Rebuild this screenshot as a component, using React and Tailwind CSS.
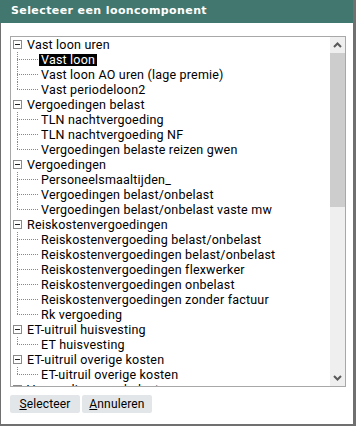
import React from "react";

const groups = [
  { label: "Vast loon uren", children: ["Vast loon", "Vast loon AO uren (lage premie)", "Vast periodeloon2"] },
  { label: "Vergoedingen belast", children: ["TLN nachtvergoeding", "TLN nachtvergoeding NF", "Vergoedingen belaste reizen gwen"] },
  { label: "Vergoedingen", children: ["Personeelsmaaltijden_", "Vergoedingen belast/onbelast", "Vergoedingen belast/onbelast vaste mw"] },
  {
    label: "Reiskostenvergoedingen",
    children: [
      "Reiskostenvergoeding belast/onbelast",
      "Reiskostenvergoedingen belast/onbelast",
      "Reiskostenvergoedingen flexwerker",
      "Reiskostenvergoedingen onbelast",
      "Reiskostenvergoedingen zonder factuur",
      "Rk vergoeding",
    ],
  },
  { label: "ET-uitruil huisvesting", children: ["ET huisvesting"] },
  { label: "ET-uitruil overige kosten", children: ["ET-uitruil overige kosten"] },
  { label: "Vergoedingen onbelast", children: ["Overige vergoedingen"] },
];

function MinusBox() {
  return (
    <div className="w-[9px] h-[9px] border border-[#8a8a8a] bg-white flex items-center justify-center shrink-0">
      <div className="w-[5px] h-px bg-[#222]" />
    </div>
  );
}

function ChildRow({ text, last, selected }) {
  return (
    <div className="h-[15px] flex items-stretch">
      <div className="w-[6px] shrink-0" />
      <div className="w-[22px] shrink-0 flex flex-col">
        <div className="h-[7px] border-l border-dotted border-[#888]" />
        <div className="h-px border-t border-dotted border-[#888] w-[21px]" />
        <div className={"flex-1 " + (last ? "" : "border-l border-dotted border-[#888]")} />
      </div>
      <div className="flex items-center">
        {selected ? (
          <span className="bg-black text-white px-[2px] h-[12px] leading-[12px] whitespace-nowrap">{text}</span>
        ) : (
          <span className="px-[2px] whitespace-nowrap leading-[12px]">{text}</span>
        )}
      </div>
    </div>
  );
}

function Chevron({ down }) {
  return (
    <svg width="9" height="6" viewBox="0 0 9 6" className="block">
      {down ? (
        <path d="M1 1 L4.5 4.5 L8 1" fill="none" stroke="#5a5a5a" strokeWidth="2" />
      ) : (
        <path d="M1 5 L4.5 1.5 L8 5" fill="none" stroke="#5a5a5a" strokeWidth="2" />
      )}
    </svg>
  );
}

export default function App() {
  return (
    <div
      className="w-[356px] h-[426px] flex flex-col bg-white border-r-[3px] border-[#707070] overflow-hidden text-black"
      style={{ fontFamily: "Roboto, 'Noto Sans', sans-serif" }}
    >
      <div className="h-[23px] bg-[#41776f] flex items-center pl-[11px] shrink-0">
        <span
          className="text-white font-bold text-[11px] tracking-[0.4px]"
          style={{ fontFamily: "'DejaVu Sans', Verdana, sans-serif" }}
        >
          Selecteer een looncomponent
        </span>
      </div>
      <div className="flex-1 flex flex-col border-l border-b-2 border-[#707070] pl-[9px] pt-[13px]">
        <div className="w-[336px] h-[351px] border border-[#a8a8a8] flex overflow-hidden">
          <div className="flex-1 overflow-hidden text-[12.5px] tracking-[0.2px]">
            {groups.map((g, gi) => (
              <div key={gi}>
                <div className="h-[15px] flex items-center">
                  <div className="w-[2px] shrink-0" />
                  <MinusBox />
                  <div className="w-[5px] shrink-0" />
                  <span className="whitespace-nowrap leading-[12px]">{g.label}</span>
                </div>
                {g.children.map((c, ci) => (
                  <ChildRow
                    key={ci}
                    text={c}
                    last={ci === g.children.length - 1}
                    selected={gi === 0 && ci === 0}
                  />
                ))}
              </div>
            ))}
          </div>
          <div className="w-[15px] bg-[#efefef] flex flex-col shrink-0">
            <div className="h-[16px] flex items-center justify-center">
              <Chevron />
            </div>
            <div className="h-[154px] bg-[#cdcdcd]" />
            <div className="flex-1" />
            <div className="h-[16px] flex items-center justify-center">
              <Chevron down />
            </div>
          </div>
        </div>
        <div className="flex gap-[2px] mt-[8px] text-[12px] tracking-[0.15px]">
          <button className="w-[70px] h-[18px] bg-[#e3e6e9] rounded-[2px] flex items-center justify-center leading-none">
            <span className="whitespace-nowrap"><span className="underline">S</span>electeer</span>
          </button>
          <button className="w-[70px] h-[18px] bg-[#e3e6e9] rounded-[2px] flex items-center justify-center leading-none">
            <span className="whitespace-nowrap"><span className="underline">A</span>nnuleren</span>
          </button>
        </div>
      </div>
    </div>
  );
}
